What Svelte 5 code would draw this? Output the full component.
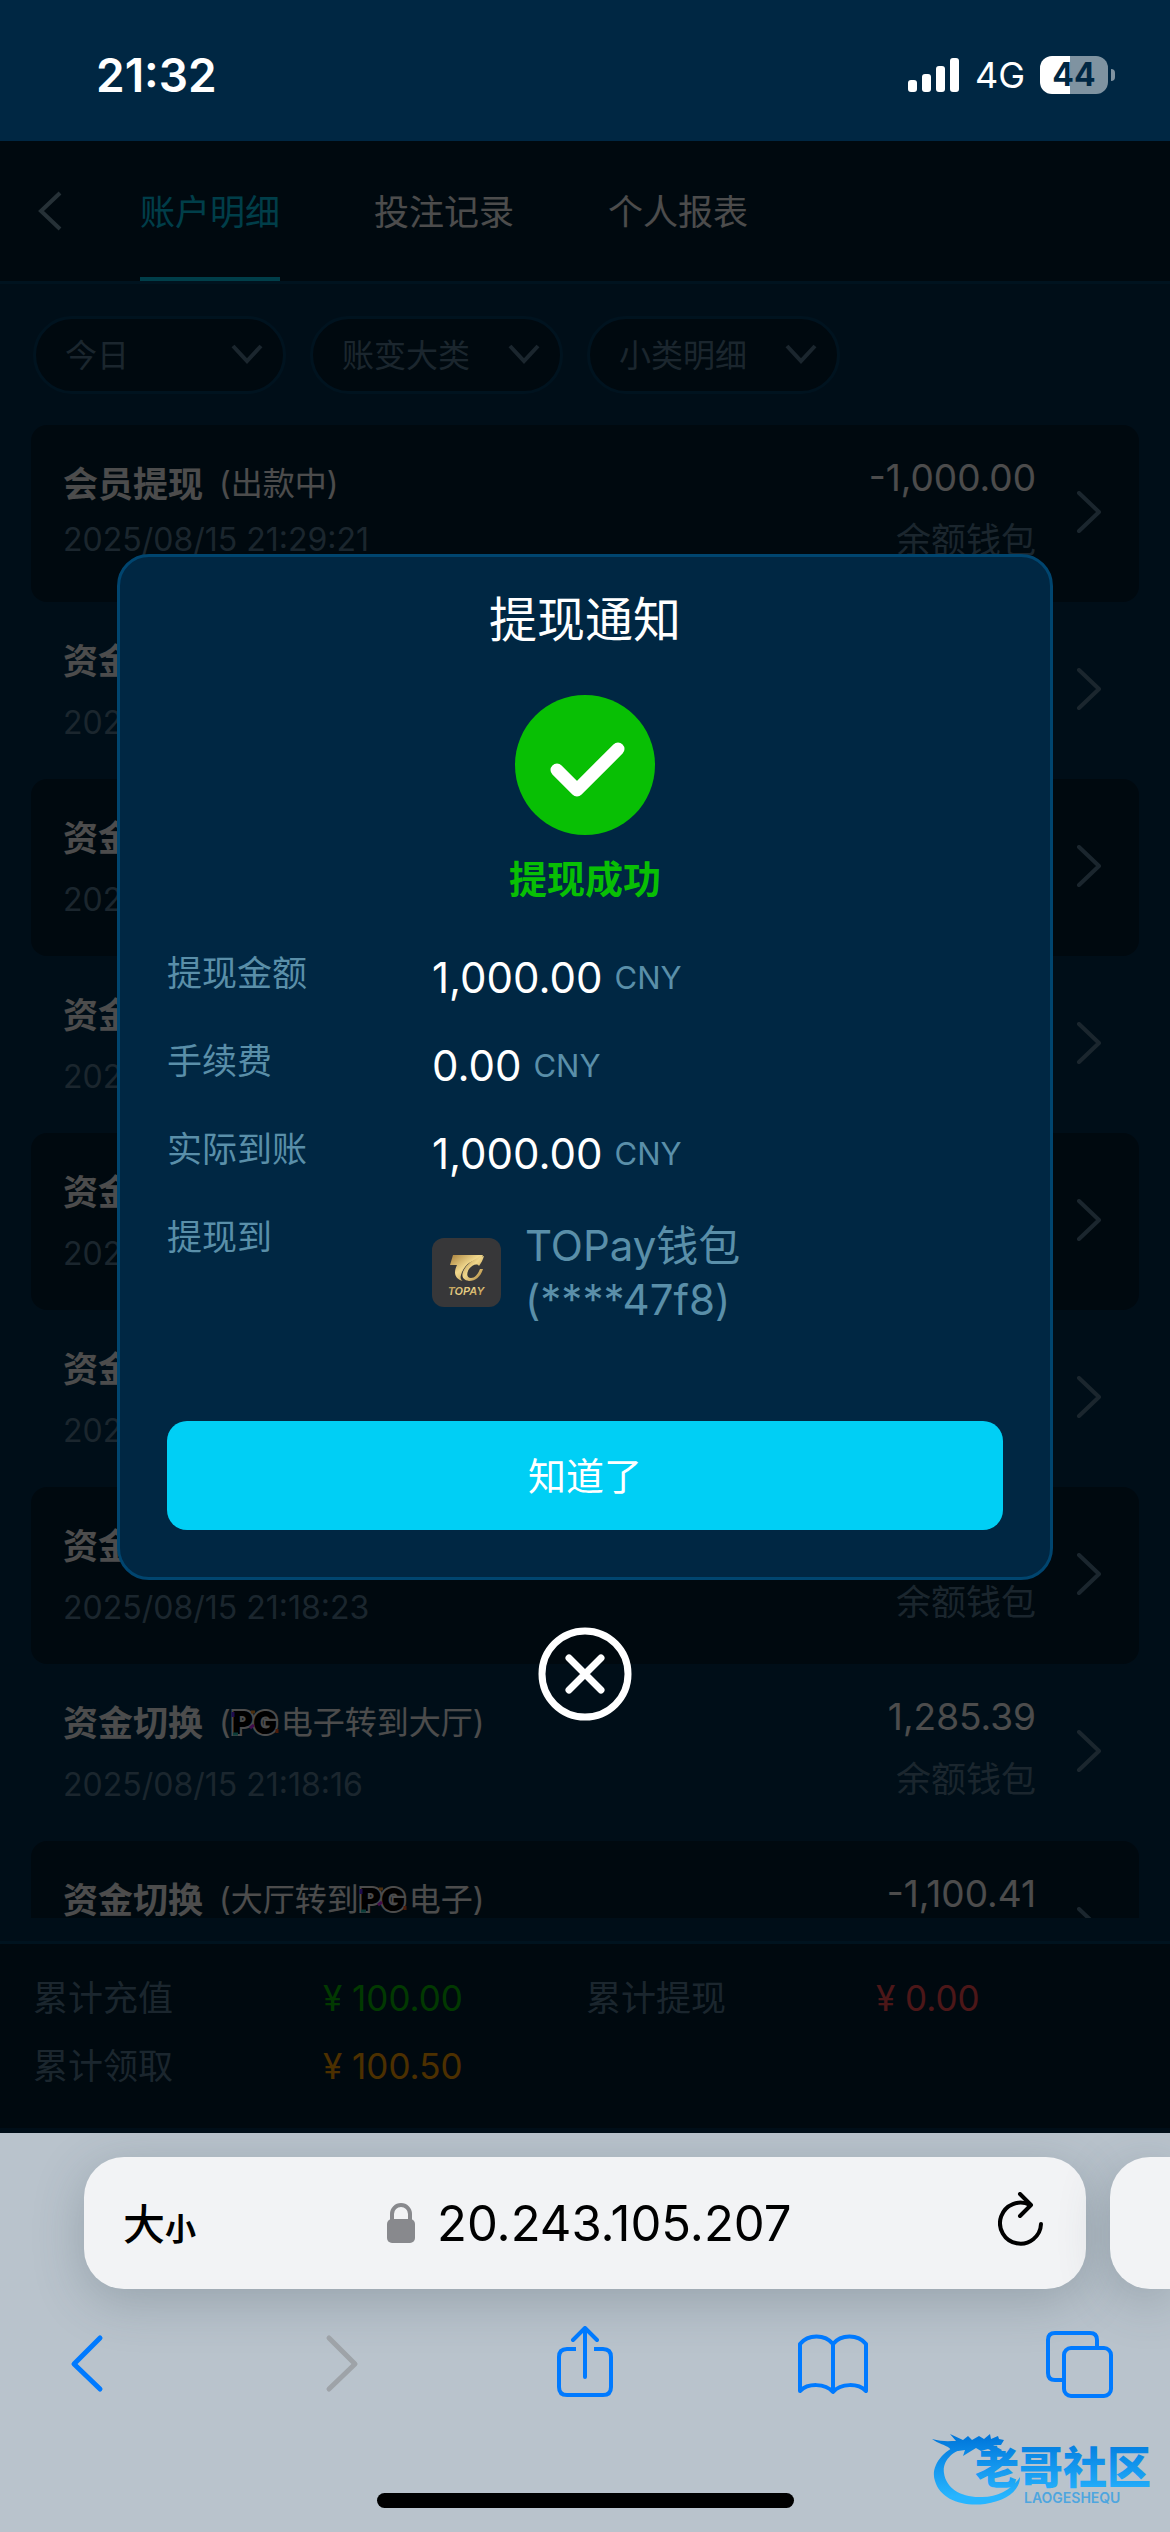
<script>
    let open = true;

    const tabs = ['账户明细', '投注记录', '个人报表'];
    let activeTab = '账户明细';

    const filters = [
        { name: '日期', value: '今日' },
        { name: '账变大类', value: '账变大类' },
        { name: '小类明细', value: '小类明细' }
    ];

    // note is split around the provider logo
    const toHall = { before: '', after: '电子转到大厅' };
    const toGame = { before: '大厅转到', after: '电子' };

    const records = [
        { title: '会员提现', text: '出款中', time: '2025/08/15 21:29:21', amount: '-1,000.00' },
        { title: '资金切换', note: toHall, time: '2025/08/15 21:28:50', amount: '1,285.39' },
        { title: '资金切换', note: toGame, time: '2025/08/15 21:27:36', amount: '-1,285.39' },
        { title: '资金切换', note: toHall, time: '2025/08/15 21:24:12', amount: '1,285.39' },
        { title: '资金切换', note: toGame, time: '2025/08/15 21:21:47', amount: '-1,285.39' },
        { title: '资金切换', note: toHall, time: '2025/08/15 21:19:05', amount: '1,285.39' },
        { title: '资金切换', note: toGame, time: '2025/08/15 21:18:23', amount: '-1,285.39' },
        { title: '资金切换', note: toHall, time: '2025/08/15 21:18:16', amount: '1,285.39' },
        { title: '资金切换', note: toGame, time: '2025/08/15 21:16:02', amount: '-1,100.41' }
    ];

    const totals = [
        { label: '累计充值', value: '100.00', kind: 'green' },
        { label: '累计提现', value: '0.00', kind: 'red' },
        { label: '累计领取', value: '100.50', kind: 'orange' }
    ];

    const details = [
        { label: '提现金额', value: '1,000.00' },
        { label: '手续费', value: '0.00' },
        { label: '实际到账', value: '1,000.00' }
    ];
</script>

<div class="screen">
    <div class="status">
        <span class="clock">21:32</span>
        <div class="signals">
            <svg width="52" height="34" viewBox="0 0 52 34" fill="#fff" aria-hidden="true">
                <rect x="0" y="22" width="9" height="12" rx="3" />
                <rect x="14" y="16" width="9" height="18" rx="3" />
                <rect x="28" y="8" width="9" height="26" rx="3" />
                <rect x="42" y="0" width="9" height="34" rx="3" />
            </svg>
            <span class="network">4G</span>
            <div class="battery"><span>44</span></div>
        </div>
    </div>

    <main>
        <header>
            <button class="back" aria-label="返回">
                <svg width="26" height="40" viewBox="0 0 26 40" fill="none" stroke="currentColor" stroke-width="4">
                    <path d="M23 2 4 20 23 38" />
                </svg>
            </button>
            <nav>
                {#each tabs as tab}
                    <button class="tab" class:active={tab === activeTab} on:click={() => (activeTab = tab)}>{tab}</button>
                {/each}
            </nav>
        </header>

        <div class="filters">
            {#each filters as filter}
                <div class="filter">
                    <select aria-label={filter.name}>
                        <option>{filter.value}</option>
                    </select>
                    <svg width="32" height="20" viewBox="0 0 32 20" fill="none" stroke="currentColor" stroke-width="4">
                        <path d="M2 2 16 17 30 2" />
                    </svg>
                </div>
            {/each}
        </div>

        <ul class="records">
            {#each records as record}
                <li>
                    <a href="#detail">
                        <div class="info">
                            <div class="title" class:with-logo={record.note}>
                                <b>{record.title}</b>
                                <span class="note">
                                    ({#if record.note}{record.note.before}<svg class="pg" width="50" height="28" viewBox="0 0 50 28" role="img" aria-label="PG">
                                        <text x="1" y="25">PG</text>
                                        <path d="M2 8V3" stroke="#6a2bff" /><path d="M20 3h4" stroke="#ff9a2b" />
                                        <path d="M46 20v4" stroke="#ff5a1f" /><path d="M2 25h5" stroke="#25c8c0" />
                                        <path d="M19 19l4-3" stroke="#e02bff" />
                                    </svg>{record.note.after}{:else}{record.text}{/if})
                                </span>
                            </div>
                            <time>{record.time}</time>
                        </div>
                        <div class="sum">
                            <span class="amount">{record.amount}</span>
                            <span class="wallet">余额钱包</span>
                        </div>
                        <svg width="26" height="42" viewBox="0 0 26 42" fill="none" stroke="currentColor" stroke-width="4" stroke-linecap="round" stroke-linejoin="round">
                            <path d="M3 2 23 21 3 40" />
                        </svg>
                    </a>
                </li>
            {/each}
        </ul>

        <dl class="totals">
            {#each totals as total}
                <div>
                    <dt>{total.label}</dt>
                    <dd class={total.kind}>¥ {total.value}</dd>
                </div>
            {/each}
        </dl>

        {#if open}
            <div class="mask">
                <div class="dialog" role="dialog" aria-labelledby="dialog-title">
                    <h2 id="dialog-title">提现通知</h2>
                    <svg class="ok" width="140" height="140" viewBox="0 0 140 140" aria-hidden="true">
                        <circle cx="70" cy="70" r="70" fill="#08bf04" />
                        <path d="M42 75 62 95 103 54" fill="none" stroke="#fff" stroke-width="13" stroke-linecap="round" stroke-linejoin="round" />
                    </svg>
                    <p class="result">提现成功</p>
                    <dl class="details">
                        {#each details as row}
                            <dt>{row.label}</dt>
                            <dd>{row.value} <small>CNY</small></dd>
                        {/each}
                        <dt>提现到</dt>
                        <dd class="target">
                            <svg width="69" height="69" viewBox="0 0 69 69" role="img" aria-label="TOPAY">
                                <defs>
                                    <linearGradient id="gold" x1="0" x2="1" y1="0" y2="1">
                                        <stop offset="0" stop-color="#a8803c" />
                                        <stop offset="0.45" stop-color="#f0d78c" />
                                        <stop offset="1" stop-color="#a67c35" />
                                    </linearGradient>
                                </defs>
                                <rect width="69" height="69" rx="12" fill="#373739" />
                                <path d="M21 17H51L49 21C39 22 32 27 29 37C28 40 29 42 31 43C23 41 21 35 25 27H18Z" fill="url(#gold)" />
                                <path d="M52 18C51 22 49 25 47 28C45 25 40 27 37 31C34 36 35 40 39 40C43 40 46 36 48 31H51C49 38 44 43 37 43C29 42 29 36 33 30C37 24 44 20 52 18Z" fill="url(#gold)" />
                                <text x="34" y="57" text-anchor="middle" fill="url(#gold)">TOPAY</text>
                            </svg>
                            <span>TOPay钱包<br />(****47f8)</span>
                        </dd>
                    </dl>
                    <button class="confirm" on:click={() => (open = false)}>知道了</button>
                </div>
                <button class="close" aria-label="关闭" on:click={() => (open = false)}>
                    <svg width="94" height="94" viewBox="0 0 94 94" fill="none" stroke="#fff">
                        <circle cx="47" cy="47" r="43" stroke-width="7" />
                        <path d="M31 31 63 63M63 31 31 63" stroke-width="7" stroke-linecap="round" />
                    </svg>
                </button>
            </div>
        {/if}
    </main>

    <footer class="browser">
        <div class="bars">
            <div class="address">
                <button class="size" aria-label="大小">大<small>小</small></button>
                <div class="url">
                    <svg width="28" height="40" viewBox="0 0 28 40" aria-hidden="true">
                        <path d="M5 18V11a9 9 0 0 1 18 0V18" fill="none" stroke="#88898d" stroke-width="4" />
                        <rect y="16" width="28" height="24" rx="5" fill="#88898d" />
                    </svg>
                    <input aria-label="地址" value="20.243.105.207" />
                </div>
                <button aria-label="刷新">
                    <svg width="46" height="58" viewBox="0 0 46 58" fill="none" stroke="#000" stroke-width="4" stroke-linecap="round" stroke-linejoin="round">
                        <path d="M43 32A20.5 20.5 0 1 1 32 13" />
                        <path d="M22 2 33 13 22 24" />
                    </svg>
                </button>
            </div>
            <div class="next-tab"></div>
        </div>

        <div class="toolbar">
            <button aria-label="后退">
                <svg viewBox="0 0 80 72"><path d="M54 12 28 38 54 63" stroke-width="5" /></svg>
            </button>
            <button class="off" aria-label="前进" disabled>
                <svg viewBox="0 0 80 72"><path d="M34 12 60 38 34 63" stroke-width="5" /></svg>
            </button>
            <button aria-label="分享">
                <svg viewBox="0 0 80 72">
                    <path d="M33 23H24Q16 23 16 31V61Q16 69 24 69H60Q68 69 68 61V31Q68 23 60 23H51" stroke-linecap="butt" />
                    <path d="M42 51V3M30 14 42 2 54 14" />
                </svg>
            </button>
            <button aria-label="书签">
                <svg viewBox="0 0 80 72">
                    <path d="M41 18C33 8 16 8 8 18V65C16 57 33 57 41 66C49 57 66 57 74 65V18C66 8 49 8 41 18ZM41 18V65" />
                </svg>
            </button>
            <button aria-label="标签页">
                <svg viewBox="0 0 80 72">
                    <rect x="24" y="22" width="47" height="48" rx="7" />
                    <path d="M57 20V14Q57 7 50 7H15Q8 7 8 14V47Q8 54 15 54H22" stroke-linecap="butt" />
                </svg>
            </button>
        </div>

        <div class="home"></div>

        <svg class="community" width="226" height="78" viewBox="0 0 226 78" aria-hidden="true">
            <defs>
                <linearGradient id="blue" x1="0" x2="0" y1="0" y2="78" gradientUnits="userSpaceOnUse">
                    <stop offset="0.1" stop-color="#0078dc" />
                    <stop offset="0.85" stop-color="#27b5ff" />
                </linearGradient>
            </defs>
            <path d="M33 13C12 20 0 37 5 51C10 69 32 77 55 74C77 71 90 60 90 47C82 59 69 67 52 67C31 68 16 58 14 43C12 31 23 20 38 17Z" fill="url(#blue)" />
            <path d="M2 9C12 12 20 11 26 11L20 4 33 10 38 6 42 10 49 6 54 9 60 4 61 9 68 6 69 9 74 10 71 15 63 15 72 20 69 24 58 19 51 21 46 18 33 26 35 20 21 22C22 16 10 15 2 9Z" fill="url(#blue)" />
            <text x="45" y="54" class="cn" fill="url(#blue)">老哥社区</text>
            <text x="94" y="73" class="en" fill="#4ea6df">LAOGESHEQU</text>
        </svg>
    </footer>
</div>

<style>
    :global(body) {
        margin: 0;
    }
    .screen {
        height: 100vh;
        display: flex;
        flex-direction: column;
        overflow: hidden;
        font-family: Inter, "Noto Sans CJK SC", sans-serif;
        font-size: 35px;
        color: #fff;
    }
    button {
        padding: 0;
        border: none;
        background: none;
        font: inherit;
        color: inherit;
        cursor: pointer;
    }
    svg {
        display: block;
        flex: none;
    }
    h2,
    p,
    dl,
    dd,
    ul {
        margin: 0;
        padding: 0;
    }

    /* status bar */
    .status {
        flex: none;
        display: flex;
        align-items: center;
        justify-content: space-between;
        box-sizing: border-box;
        height: 141px;
        padding: 8px 55px 0 96px;
        background: #002743;
    }
    .clock {
        font-size: 46px;
        font-weight: 600;
    }
    .signals {
        display: flex;
        align-items: center;
        gap: 15px;
    }
    .network {
        font-size: 36px;
    }
    .battery {
        position: relative;
        width: 68px;
        height: 38px;
        margin-right: 7px;
        border-radius: 12px;
        background: linear-gradient(to right, #fff 44%, #7f93a1 44%);
        color: #002743;
        font-size: 32px;
        font-weight: 700;
        line-height: 38px;
        text-align: center;
    }
    .battery::after {
        content: "";
        position: absolute;
        top: 13px;
        right: -7px;
        width: 4px;
        height: 12px;
        border-radius: 0 4px 4px 0;
        background: #7f93a1;
    }

    /* page */
    main {
        position: relative;
        flex: 1;
        min-height: 0;
        display: flex;
        flex-direction: column;
        padding-bottom: 5px;
        background: #003050;
    }
    header {
        flex: none;
        display: flex;
        align-items: center;
        height: 140px;
        padding-left: 37px;
        border-bottom: 3px solid #00406a;
        background: #001e33;
    }
    .back {
        color: #7fa5b8;
    }
    nav {
        display: flex;
        gap: 94px;
        margin-left: 77px;
    }
    .tab {
        height: 140px;
        padding-bottom: 4px;
        border: solid transparent;
        border-width: 4px 0;
    }
    .tab.active {
        border-bottom-color: #00cff5;
        color: #00cff5;
    }
    .filters {
        flex: none;
        display: flex;
        gap: 24px;
        padding: 32px 33px 31px;
    }
    .filter {
        position: relative;
        width: 253px;
        color: #5a8199;
    }
    .filter select {
        appearance: none;
        width: 100%;
        height: 78px;
        padding: 0 60px 0 29px;
        border: 3px solid #00406a;
        border-radius: 39px;
        background: #001e33;
        font: inherit;
        font-size: 32px;
        color: inherit;
    }
    .filter svg {
        position: absolute;
        top: 28px;
        right: 23px;
    }
    .records {
        flex: 1;
        min-height: 0;
        overflow: hidden;
        margin: 0 31px 23px;
        list-style: none;
    }
    .records li {
        border-radius: 16px;
    }
    .records li:nth-child(odd) {
        background: #001e33;
    }
    .records a {
        display: flex;
        align-items: center;
        box-sizing: border-box;
        min-height: 177px;
        padding: 0 37px 4px 32px;
        color: #5a8199;
        text-decoration: none;
    }
    .info {
        flex: 1;
    }
    .title {
        display: flex;
        align-items: center;
        gap: 16px;
        line-height: 56px;
        color: #fff;
    }
    .title.with-logo {
        line-height: 68px;
    }
    .title b {
        font-weight: 700;
    }
    .note {
        display: flex;
        align-items: center;
        font-size: 32px;
    }
    .pg text {
        font-size: 32px;
        font-weight: 900;
        fill: #000;
        stroke: #fff;
        stroke-width: 4px;
        paint-order: stroke;
    }
    .pg path {
        stroke-width: 3px;
    }
    time {
        display: block;
        font-size: 32px;
        line-height: 56px;
    }
    .sum {
        display: flex;
        flex-direction: column;
        align-items: flex-end;
        margin-right: 40px;
        padding-bottom: 6px;
        line-height: 62px;
    }
    .amount {
        font-size: 37px;
        color: #fff;
    }
    .totals {
        flex: none;
        display: grid;
        grid-template-columns: 1fr 1fr;
        padding: 20px 31px 28px 33px;
        border-top: 3px solid #00406a;
        background: #001e33;
        line-height: 68px;
    }
    .totals div {
        display: flex;
    }
    .totals dt {
        width: 290px;
        color: #5a8199;
    }
    .green {
        color: #08bf04;
    }
    .red {
        color: #ff4d53;
    }
    .orange {
        color: #ffa000;
    }

    /* dialog */
    .mask {
        position: absolute;
        inset: 0;
        display: flex;
        flex-direction: column;
        align-items: center;
        justify-content: center;
        gap: 47px;
        background: rgba(0, 0, 0, 0.7);
    }
    .dialog {
        box-sizing: border-box;
        width: 80%;
        padding: 28px 47px 47px;
        border: 3px solid #00456f;
        border-radius: 32px;
        background: #002743;
    }
    h2 {
        font-size: 48px;
        font-weight: 400;
        line-height: 70px;
        text-align: center;
    }
    .ok {
        margin: 40px auto 14px;
    }
    .result {
        font-size: 38px;
        font-weight: 700;
        line-height: 60px;
        text-align: center;
        color: #08bf04;
    }
    .details {
        display: grid;
        grid-template-columns: 265px 1fr;
        padding: 20px 0 94px;
        color: #5a8fa9;
    }
    .details dt {
        line-height: 88px;
    }
    .details dd {
        display: flex;
        align-items: center;
        gap: 12px;
        padding-top: 10px;
        font-size: 42px;
        line-height: 78px;
        color: #fff;
    }
    .details small {
        font-size: 31px;
        color: #5a8fa9;
    }
    .details .target {
        gap: 24px;
        padding-top: 26px;
        line-height: 54px;
        color: inherit;
    }
    .target text {
        font-size: 11px;
        font-style: italic;
        font-weight: 600;
    }
    .confirm {
        display: block;
        width: 100%;
        height: 109px;
        padding-bottom: 4px;
        border-radius: 20px;
        background: #00cff5;
        font-size: 38px;
    }

    /* browser chrome */
    .browser {
        position: relative;
        flex: none;
        padding: 24px 0;
        overflow: hidden;
        background: #b9c3cc;
    }
    .bars {
        display: flex;
        gap: 24px;
        padding-left: 84px;
    }
    .address,
    .next-tab {
        height: 132px;
        background: #f2f3f5;
        box-shadow: 0 12px 50px rgba(60, 80, 90, 0.28);
    }
    .address {
        flex: 1;
        display: flex;
        align-items: center;
        justify-content: space-between;
        box-sizing: border-box;
        padding: 0 42px 4px 39px;
        border-radius: 40px;
        color: #000;
    }
    .next-tab {
        width: 60px;
        border-radius: 40px 0 0 40px;
    }
    .size {
        font-size: 42px;
        font-weight: 500;
    }
    .size small {
        font-size: 31px;
        font-weight: 700;
    }
    .url {
        display: flex;
        align-items: center;
        gap: 22px;
        padding-top: 4px;
    }
    .url input {
        width: 370px;
        padding: 0;
        border: none;
        outline: none;
        background: none;
        font: inherit;
        font-size: 49px;
        color: #000;
    }
    .toolbar {
        display: flex;
        justify-content: space-between;
        margin: 37px 50px 95px 46px;
        color: #007aff;
    }
    .toolbar svg {
        width: 80px;
        height: 72px;
        fill: none;
        stroke: currentColor;
        stroke-width: 4px;
        stroke-linecap: round;
        stroke-linejoin: round;
    }
    .toolbar .off {
        color: #9ea3a8;
    }
    .home {
        width: 417px;
        height: 15px;
        margin: 0 auto;
        border-radius: 8px;
        background: #000;
    }
    .community {
        position: absolute;
        right: 14px;
        bottom: 24px;
    }
    .cn {
        font-size: 44px;
        font-weight: 900;
    }
    .en {
        font-size: 14px;
        font-weight: 600;
    }
</style>
